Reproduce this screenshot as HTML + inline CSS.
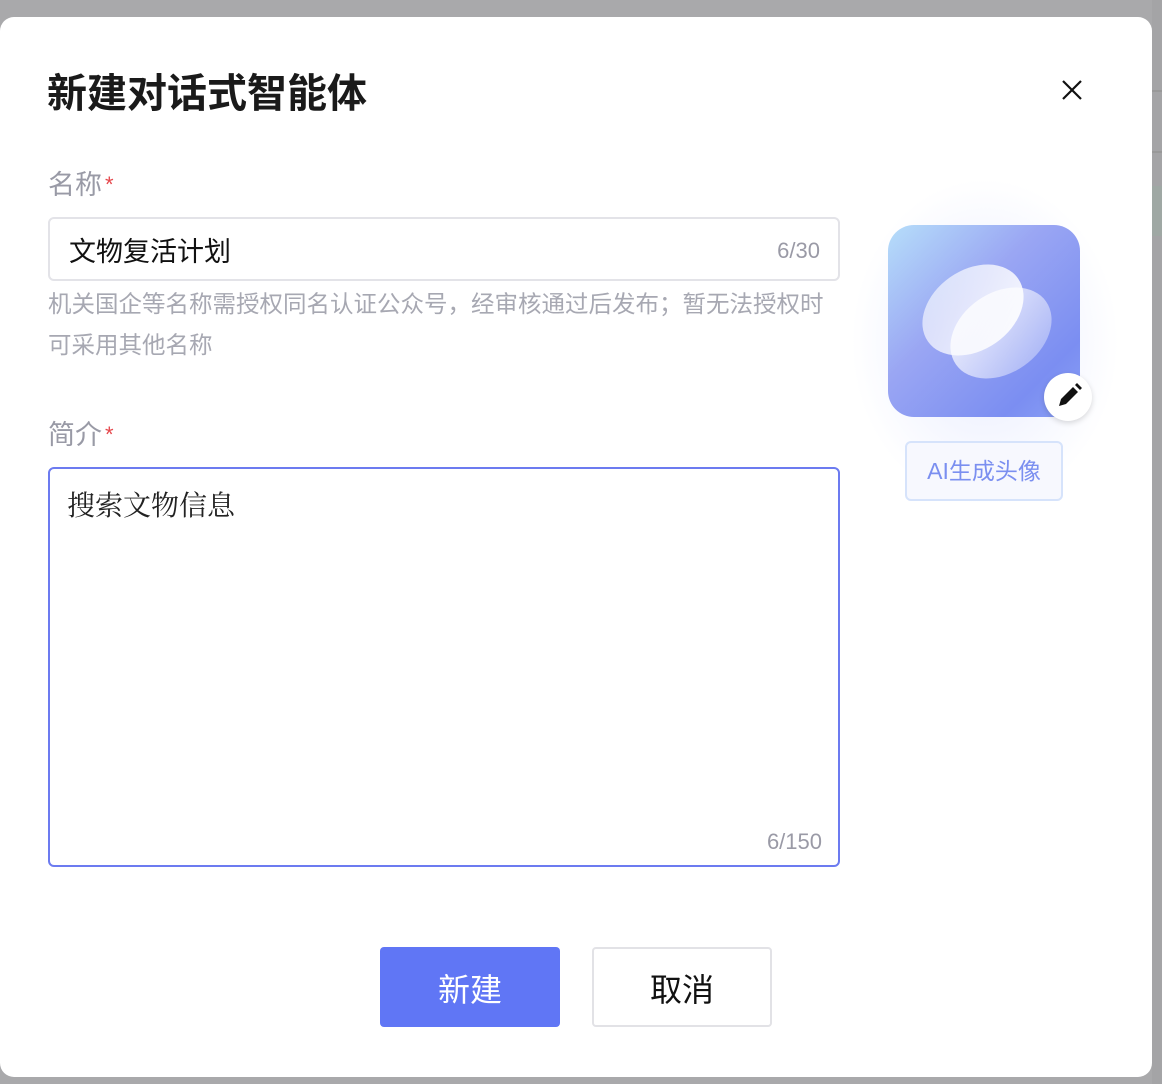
<!DOCTYPE html>
<html><head><meta charset="utf-8"><style>
*{margin:0;padding:0;box-sizing:border-box}
body{width:1162px;height:1084px;background:#a9a9ab;position:relative;overflow:hidden;font-family:"Liberation Sans","Noto Sans CJK SC",sans-serif}
.bgr{position:absolute;left:1152px;top:0;width:10px;height:1084px;background:#a4a4a6}
.modal{position:absolute;left:0;top:17px;width:1152px;height:1060px;background:#fff;border-radius:14px}
.t{position:absolute;left:47px;top:44px;font-size:40px;font-weight:bold;color:#1a1a1a}
.x{position:absolute;left:1060px;top:61px}
.lbl{position:absolute;left:48px;font-size:27px;color:#999aa6}
.lbl span{color:#e5484d;font-size:22px;position:relative;top:-2px;margin-left:3px}
.inp{position:absolute;left:48px;top:200px;width:792px;height:64px;border:2px solid #e3e3e8;border-radius:6px}
.inp .v{position:absolute;left:19px;top:11px;font-size:27px;color:#111}
.cnt{position:absolute;font-size:22px;color:#9a9aa6}
.help{position:absolute;left:48px;top:267px;width:795px;font-size:23.5px;line-height:41px;color:#a7a8b2}
.ta{position:absolute;left:48px;top:450px;width:792px;height:400px;border:2px solid #6c7bf0;border-radius:6px}
.ta .v{position:absolute;left:17px;top:15px;font-size:28px;color:#222;font-family:"Liberation Serif","Noto Serif CJK SC",serif}
.glow{position:absolute;left:850px;top:160px;width:270px;height:330px;border-radius:50%;background:radial-gradient(ellipse at center,rgba(215,222,255,.6),rgba(255,255,255,0) 70%)}
.av{position:absolute;left:888px;top:208px;width:192px;height:192px;border-radius:26px;overflow:hidden;background:linear-gradient(135deg,#b6defa 0%,#9aa6f3 40%,#7b8ef2 80%,#8aa0f5 100%)}
.e1{position:absolute;left:30px;top:45px;width:110px;height:80px;border-radius:50%;background:linear-gradient(150deg,rgba(255,255,255,.55),rgba(255,255,255,.95));transform:rotate(-35deg)}
.e2{position:absolute;left:58px;top:68px;width:110px;height:80px;border-radius:50%;background:linear-gradient(160deg,rgba(255,255,255,.85),rgba(255,255,255,.3));transform:rotate(-35deg)}
.pen{position:absolute;left:1044px;top:356px;width:48px;height:48px;border-radius:50%;background:#fff;box-shadow:0 2px 6px rgba(0,0,0,.15)}
.aib{position:absolute;left:905px;top:424px;width:158px;height:60px;border:2px solid #d6e3fb;border-radius:6px;background:#f7f8fe;font-size:23px;text-align:center;line-height:56px;color:#7b8ff0}
.b1{position:absolute;left:380px;top:930px;width:180px;height:80px;background:#6076f5;border-radius:4px;color:#fff;font-size:32px;text-align:center;line-height:86px}
.b2{position:absolute;left:592px;top:930px;width:180px;height:80px;border:2px solid #e2e2e6;border-radius:4px;color:#111;font-size:32px;text-align:center;line-height:82px}
</style></head><body>
<div class="bgr"></div>
<div style="position:absolute;left:1152px;top:90px;width:10px;height:2px;background:#999"></div>
<div style="position:absolute;left:1152px;top:151px;width:10px;height:2px;background:#999"></div>
<div style="position:absolute;left:1152px;top:186px;width:10px;height:50px;background:#9fa8a4"></div>
<div class="modal">
<div class="t">新建对话式智能体</div>
<svg class="x" width="24" height="24" viewBox="0 0 24 24"><path d="M3 3L21 21M21 3L3 21" stroke="#111" stroke-width="2.2"/></svg>
<div class="lbl" style="top:146px">名称<span>*</span></div>
<div class="inp"><div class="v">文物复活计划</div><div class="cnt" style="right:18px;top:19px">6/30</div></div>
<div class="help">机关国企等名称需授权同名认证公众号，经审核通过后发布；暂无法授权时可采用其他名称</div>
<div class="lbl" style="top:396px">简介<span>*</span></div>
<div class="ta"><div class="v">搜索文物信息</div><div class="cnt" style="right:16px;bottom:10px">6/150</div></div>
<div class="glow"></div>
<div class="av"><div class="e1"></div><div class="e2"></div></div>
<div class="pen"><svg width="48" height="48" viewBox="0 0 48 48"><path d="M15 33l2-7 12-12 5 5-12 12z M31 12l2-2 5 5-2 2z" fill="#111"/></svg></div>
<div class="aib">AI生成头像</div>
<div class="b1">新建</div>
<div class="b2">取消</div>
</div>
</body></html>
